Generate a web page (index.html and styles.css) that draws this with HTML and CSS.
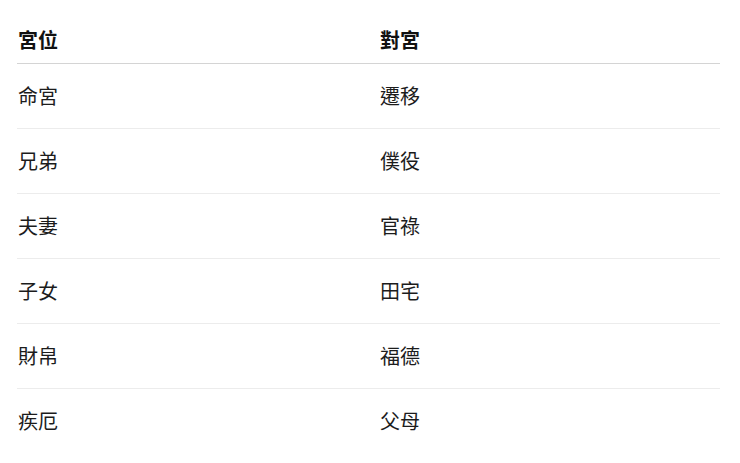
FILE: index.html
```html
<!DOCTYPE html>
<html lang="zh-Hant">
<head>
<meta charset="utf-8">
<link rel="stylesheet" href="styles.css">
</head>
<body>
<div class="wrap">
<table class="palace">
<thead>
<tr><th class="c1">宮位</th><th>對宮</th></tr>
</thead>
<tbody>
<tr><td class="c1">命宮</td><td>遷移</td></tr>
<tr><td class="c1">兄弟</td><td>僕役</td></tr>
<tr><td class="c1">夫妻</td><td>官祿</td></tr>
<tr><td class="c1">子女</td><td>田宅</td></tr>
<tr><td class="c1">財帛</td><td>福德</td></tr>
<tr><td class="c1">疾厄</td><td>父母</td></tr>
</tbody>
</table>
</div>
</body>
</html>
```
FILE: styles.css
```css
html, body {
  margin: 0;
  padding: 0;
  background: #ffffff;
}
.wrap {
  padding: 18px 20px 0 17px;
}
.palace {
  width: 703px;
  border-collapse: collapse;
  font-family: "Noto Sans CJK TC", "Noto Sans", sans-serif;
  font-size: 20px;
  line-height: 20px;
  color: #1c1c1c;
}
.palace th {
  text-align: left;
  font-weight: 700;
  color: #111;
  padding: 12px 1px 13px 1px;
  border-bottom: 1px solid #d4d4d4;
}
.palace td {
  text-align: left;
  font-weight: 400;
  padding: 22px 1px 22px 1px;
  border-bottom: 1px solid #ececec;
}
.palace tbody tr:last-child td {
  border-bottom: none;
}
.palace .c1 {
  width: 360px;
}
```
